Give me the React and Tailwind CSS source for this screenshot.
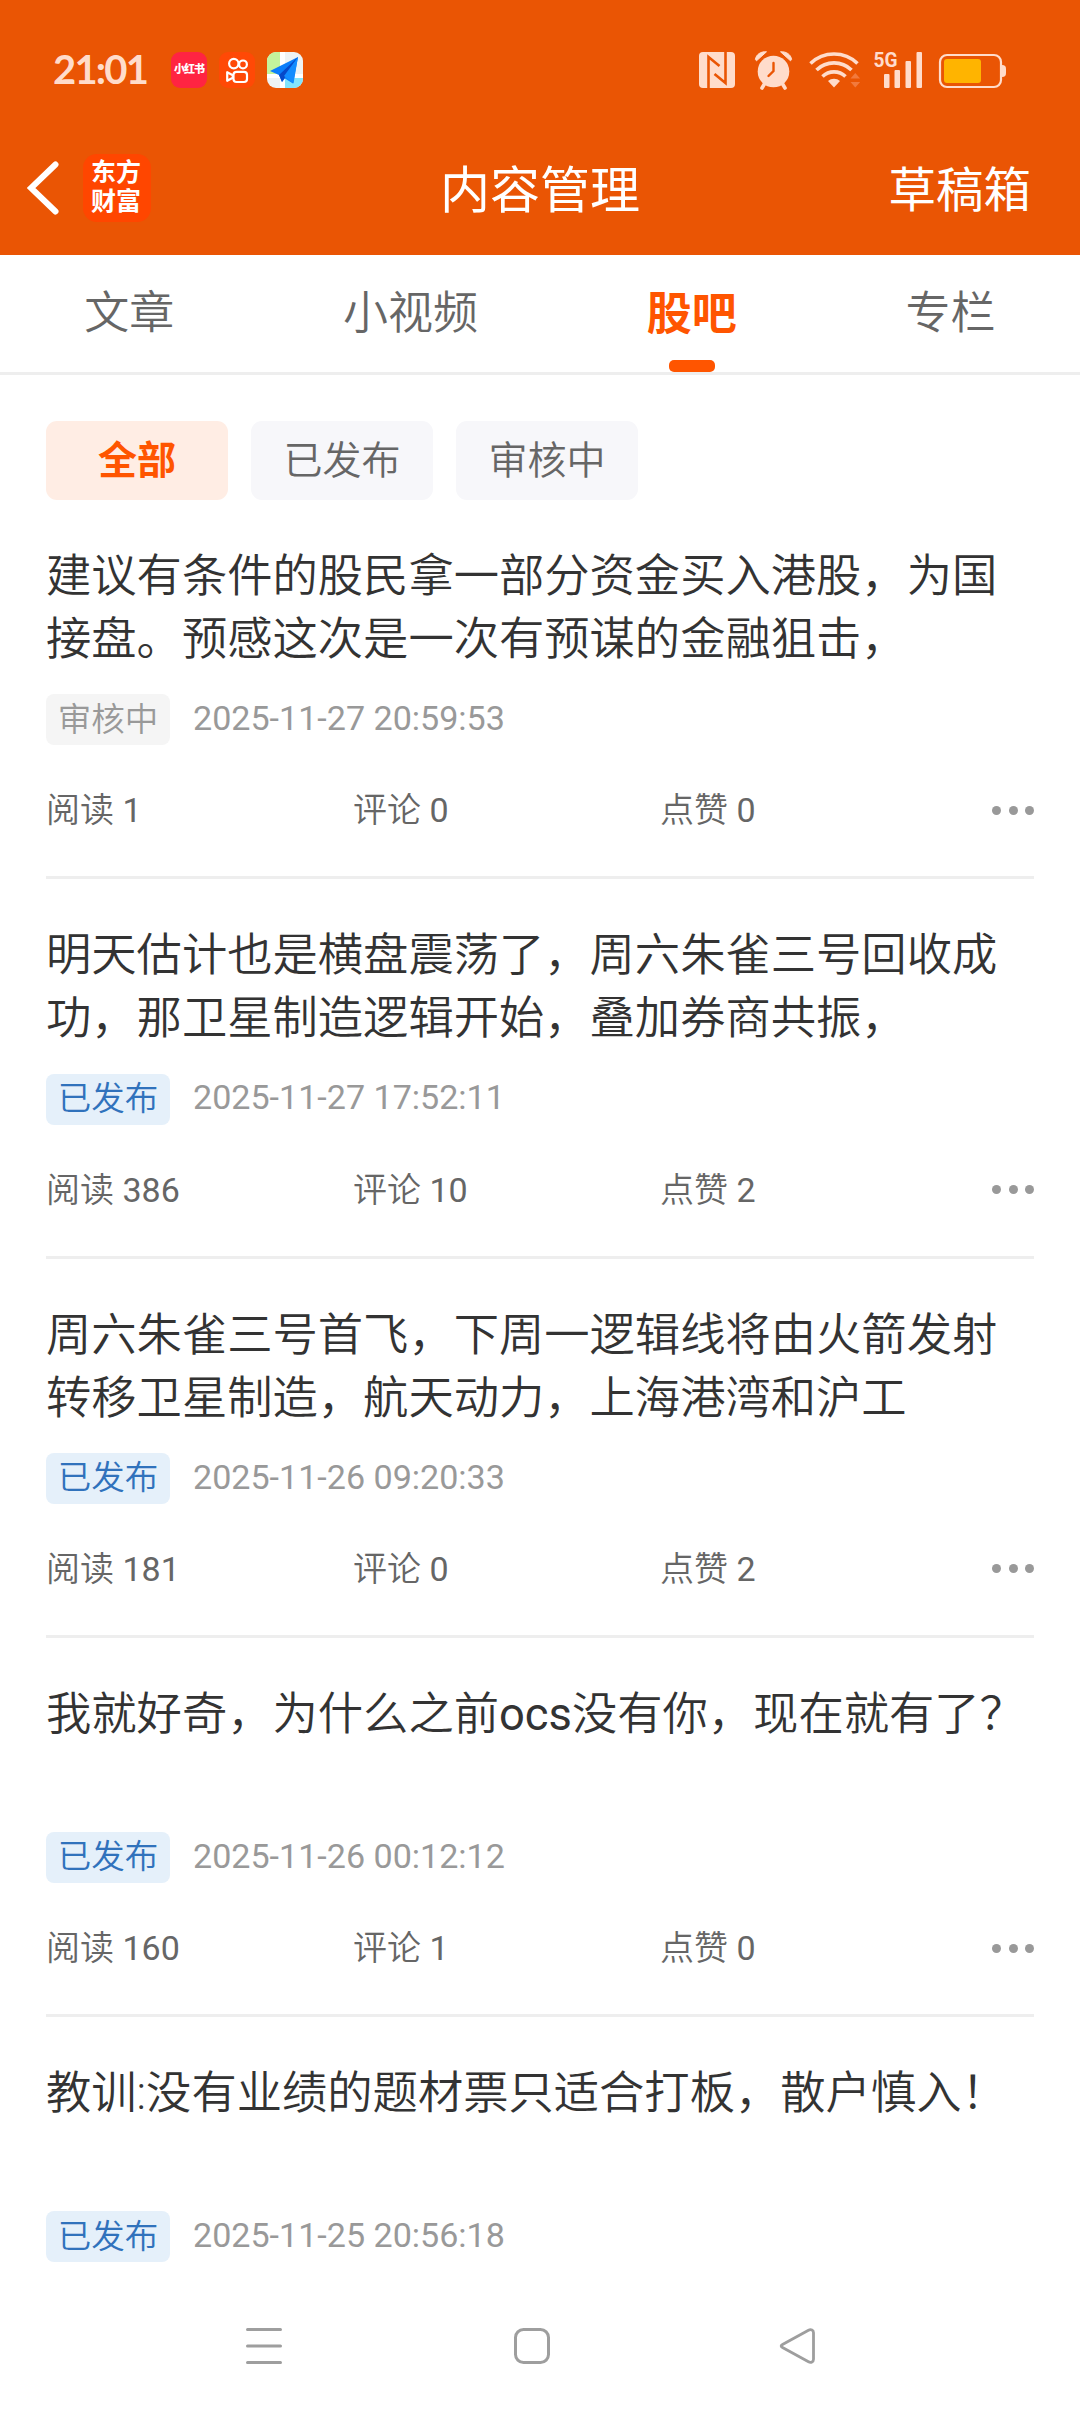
const TABS = ["文章", "小视频", "股吧", "专栏"];
const FILTERS = ["全部", "已发布", "审核中"];

const POSTS = [
  { lines: ["建议有条件的股民拿一部分资金买入港股，为国", "接盘。预感这次是一次有预谋的金融狙击，"], status: "审核中", time: "2025-11-27 20:59:53", read: 1, comment: 0, like: 0 },
  { lines: ["明天估计也是横盘震荡了，周六朱雀三号回收成", "功，那卫星制造逻辑开始，叠加券商共振，"], status: "已发布", time: "2025-11-27 17:52:11", read: 386, comment: 10, like: 2 },
  { lines: ["周六朱雀三号首飞，下周一逻辑线将由火箭发射", "转移卫星制造，航天动力，上海港湾和沪工"], status: "已发布", time: "2025-11-26 09:20:33", read: 181, comment: 0, like: 2 },
  { lines: ["我就好奇，为什么之前ocs没有你，现在就有了？"], status: "已发布", time: "2025-11-26 00:12:12", read: 160, comment: 1, like: 0 },
  { lines: ["教训:没有业绩的题材票只适合打板，散户慎入！"], status: "已发布", time: "2025-11-25 20:56:18", read: null },
];

function StatusBar() {
  return (
    <div className="flex h-[142px] items-start justify-between pt-[51px] pr-[73px] pl-[53px]">
      <div className="flex items-center">
        <span className="-mt-[2px] w-[118px] font-['Lato'] text-[40px] leading-[40px] font-bold tracking-[-1.8px] text-[#ffdccb]">21:01</span>
        <span className="flex h-9 w-9 items-center justify-center rounded-[9px] bg-[#ff2442] text-[11px] font-black tracking-[-1px] whitespace-nowrap text-white">小红书</span>
        <svg className="ml-3 h-9 w-9" viewBox="0 0 36 36" fill="none" stroke="#fff" strokeWidth="2.2">
          <rect width="36" height="36" rx="9" fill="#ff4906" stroke="none" />
          <circle cx="14.8" cy="11.6" r="4.7" />
          <circle cx="24" cy="12.4" r="3.900" />
          <rect x="14.5" y="19.8" width="13.5" height="10.2" rx="3" />
          <path d="M8.2 20.2v8.6l5.6-3v-2.6z" strokeLinejoin="round" />
        </svg>
        <svg className="ml-3 h-9 w-9" viewBox="0 0 36 36">
          <clipPath id="mapTile"><rect width="36" height="36" rx="9" /></clipPath>
          <g clipPath="url(#mapTile)">
            <rect width="36" height="36" fill="#eef3f4" />
            <path d="M0 0h13v22H0z" fill="#c4f49c" />
            <path d="M18 26h18v10H18z" fill="#84e4fc" />
            <path d="M13 0h5v36h-5zM0 22h36v4H0z" fill="#fff" />
            <path d="M31 5 3 19l9 4 3 7 3-3.5 8 5z" fill="#0a7dfa" />
            <path d="M31 5 12 23l3 7z" fill="#0648c8" />
            <path d="M31 5 17 24l9.5 7.500z" fill="#128cff" />
          </g>
        </svg>
      </div>
      <svg className="-mt-[10px] h-[58px] w-[308px] text-[#ffdccb]" viewBox="0 -10 308 58" fill="currentColor">
        <rect y="1" width="36" height="36" rx="4" />
        <path d="M9.500 37V6l11 9M26.500 1v31l-11-9" fill="none" stroke="#ea5504" strokeWidth="2.600" />
        <circle cx="74.500" cy="20.500" r="15.800" />
        <path d="M56.400 8.500C57 3.500 62 .2 67.500 .8L57.500 9.800zM92.600 8.500C92 3.500 87 .2 81.500 .8l10 9z" stroke="currentColor" strokeWidth="1" strokeLinejoin="round" />
        <path d="M66 32l-3 5M83 32l3 5" fill="none" stroke="currentColor" strokeWidth="3.600" strokeLinecap="round" />
        <path d="M74.500 12v8l-5 5" fill="none" stroke="#ea5504" strokeWidth="2.400" strokeLinecap="round" />
        <g fill="none" stroke="currentColor" strokeWidth="3.600">
          <path d="M111.500 12.500a34 34 0 0 1 47 0" />
          <path d="M117.500 19a25 25 0 0 1 35 0" />
          <path d="M123.500 25.500a16.500 16.500 0 0 1 23 0" />
        </g>
        <path d="m135 36.500-6-6.500a9 9 0 0 1 12 0z" />
        <path d="m151.500 27.500 4.800-5.500 4.800 5.500zM151.500 31l4.800 5.500 4.800-5.500z" fill="#f27a3d" />
        <text x="174.500" y="16" className="font-['Roboto'] text-[21px] font-bold" textLength="24" lengthAdjust="spacingAndGlyphs">5G</text>
        <rect x="185" y="23" width="5.500" height="14" rx="1" />
        <rect x="195.500" y="19" width="5.500" height="18" rx="1" />
        <rect x="206.500" y="10" width="5.500" height="27" rx="1" />
        <rect x="217.500" y="1" width="5.500" height="36" rx="1" />
        <rect x="241" y="4" width="61" height="32" rx="7" fill="none" stroke="currentColor" strokeWidth="2.200" />
        <rect x="245" y="8" width="37" height="24" rx="3" fill="#ffb400" />
        <path d="M303 14c3 0 4 1.500 4 4v4c0 2.500-1 4-4 4z" />
      </svg>
    </div>
  );
}

function Header() {
  return (
    <header className="h-[255px] bg-[#ea5504]">
      <StatusBar />
      <div className="grid h-[96px] grid-cols-3 items-center text-white">
        <div className="-mt-[5px] flex items-center pl-[27px]">
          <svg className="h-[56px] w-[32px]" viewBox="0 0 32 56" fill="none" stroke="#fff" strokeWidth="6" strokeLinecap="round">
            <path d="M28.500 4.500 4 28l24.500 23.500" strokeLinejoin="miter" />
          </svg>
          <div className="ml-6 flex h-[68px] w-[68px] flex-col items-center justify-center rounded-[14px] bg-[#ff4600] pr-[2px] pb-[2px] text-[25px] leading-[29px] font-bold">
            <span>东方</span>
            <span>财富</span>
          </div>
        </div>
        <h1 className="pt-[2px] text-center text-[50px] leading-[60px]">内容管理</h1>
        <div className="pt-[2px] pr-[49px] text-right text-[47.500px] leading-[60px]">草稿箱</div>
      </div>
    </header>
  );
}

function Tabs() {
  return (
    <nav className="flex h-[120px] justify-around border-b-[3px] border-[#eee] text-[45px] leading-[60px] text-[#666]">
      {TABS.map((tab) =>
        tab === "股吧" ? (
          <div key={tab} className="flex flex-col items-center justify-between pt-[30px] font-bold text-[#ff5500]">
            <span>{tab}</span>
            <span className="h-3 w-[46px] rounded-[5px] bg-[#ff5500]" />
          </div>
        ) : (
          <div key={tab} className="pt-[29px] font-[350]">{tab}</div>
        )
      )}
    </nav>
  );
}

function Filters() {
  return (
    <div className="flex gap-[23px] px-[46px] pt-[46px]">
      {FILTERS.map((f, i) => (
        <div
          key={f}
          className={
            "flex h-[79px] w-[182px] items-center justify-center rounded-[11px] pt-[2px] text-[39px] " +
            (i === 0 ? "bg-[#ffede4] font-bold text-[#ff5500]" : "bg-[#f7f7fa] font-[350] text-[#666]")
          }
        >
          {f}
        </div>
      ))}
    </div>
  );
}

// Latin runs use the regular weight, Chinese text the lighter one.
function MixedText({ text }) {
  return text
    .split(/([A-Za-z]+)/)
    .map((part, i) => (i % 2 ? <span key={i} className="font-normal">{part}</span> : part));
}

function Stat({ label, value }) {
  return (
    <span className="w-[307px]">
      <span className="font-[350]">{label}</span> {value}
    </span>
  );
}

function Post({ post }) {
  const pending = post.status === "审核中";
  return (
    <article className="mx-[46px] pt-[45px]">
      <div className="h-[125.25px] text-[45.300px] leading-[63px] font-[350] whitespace-nowrap text-[#333]">
        {post.lines.map((line) => (
          <p key={line}><MixedText text={line} /></p>
        ))}
      </div>
      <div className="mt-6 flex h-[51px] items-center text-[34px]">
        <span
          className={
            "flex h-[51px] w-[124px] items-center justify-center rounded-lg text-[33.500px] font-[350] " +
            (pending ? "bg-[#f5f5f5] text-[#999]" : "bg-[#e5f0fa] text-[#3072bc]")
          }
        >
          {post.status}
        </span>
        <span className="-mt-[2px] ml-[23px] text-[34.100px] text-[#999]">{post.time}</span>
      </div>
      {post.read !== null && (
        <div className="mt-[41px] flex h-[93px] items-start border-b-[3px] border-[#eee] text-[34px] leading-[48px] text-[#666]">
          <Stat label="阅读" value={post.read} />
          <Stat label="评论" value={post.comment} />
          <Stat label="点赞" value={post.like} />
          <span className="ml-auto flex h-12 items-center gap-[7.500px]">
            <i className="h-[9px] w-[9px] rounded-full bg-[#999]" />
            <i className="h-[9px] w-[9px] rounded-full bg-[#999]" />
            <i className="h-[9px] w-[9px] rounded-full bg-[#999]" />
          </span>
        </div>
      )}
    </article>
  );
}

function NavBar() {
  return (
    <div className="mt-auto flex h-[103px] items-start pt-[18px] pl-[245px]">
      <svg className="h-[38px] w-[38px]" viewBox="0 0 38 38" stroke="#9e9e9e" strokeWidth="3" strokeLinecap="round">
        <path d="M2.500 2.500h33M2.500 19h33M2.500 35.500h33" />
      </svg>
      <svg className="ml-[230px] h-[38px] w-[38px]" viewBox="0 0 38 38" fill="none" stroke="#9e9e9e" strokeWidth="3">
        <rect x="2.500" y="2.500" width="33" height="33" rx="8" />
      </svg>
      <svg className="ml-[228px] h-[38px] w-[38px]" viewBox="0 0 38 38" fill="none" stroke="#9e9e9e" strokeWidth="2.800">
        <path d="M3.500 17.500 29.500 3.200c2.500-1.400 5 0 5 2.500v26.600c0 2.500-2.500 3.900-5 2.500L3.500 20.500c-1.800-1-1.800-2 0-3z" />
      </svg>
    </div>
  );
}

export default function App() {
  return (
    <div className="flex h-[2412px] w-[1080px] flex-col overflow-hidden bg-white font-['Roboto','Noto_Sans_CJK_SC',sans-serif]">
      <Header />
      <Tabs />
      <Filters />
      {POSTS.map((post) => (
        <Post key={post.time} post={post} />
      ))}
      <NavBar />
    </div>
  );
}
